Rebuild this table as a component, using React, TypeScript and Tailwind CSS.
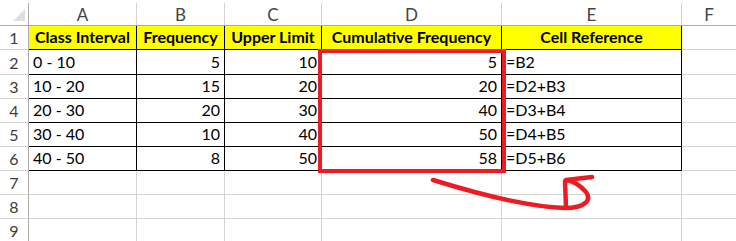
import React from "react";

const widths = ["w-[108px]", "w-[88px]", "w-[97px]", "w-[180px]", "w-[180px]"];
const letters = ["A", "B", "C", "D", "E"];
const headers = ["Class Interval", "Frequency", "Upper Limit", "Cumulative Frequency", "Cell Reference"];
const data = [
  ["0 - 10", "5", "10", "5", "=B2"],
  ["10 - 20", "15", "20", "20", "=D2+B3"],
  ["20 - 30", "20", "30", "40", "=D3+B4"],
  ["30 - 40", "10", "40", "50", "=D4+B5"],
  ["40 - 50", "8", "50", "58", "=D5+B6"],
];
const rowHeights = ["h-[24px]", "h-[25px]", "h-[24px]", "h-[24px]", "h-[24px]", "h-[24px]", "h-[24px]", "h-[24px]", "h-[24px]"];

function RowHeader({ n }: { n: number }) {
  return (
    <div className="w-[29px] shrink-0 h-full border-r border-b border-r-[#ababab] border-b-[#d4d4d4] flex items-end justify-center pb-[3px] text-[16px] leading-none text-[#3c3c3c]">
      {n}
    </div>
  );
}

export default function App() {
  return (
    <div
      className="relative w-[736px] h-[241px] overflow-hidden bg-white text-black"
      style={{ fontFamily: "Lato, 'Noto Sans', sans-serif" }}
    >
      {/* column headers */}
      <div className="flex h-[26px] pt-[3px] border-b border-[#ababab]">
        <div className="w-[29px] shrink-0 h-full border-r border-[#ababab] relative">
          <svg className="absolute right-[3px] bottom-[4px]" width="12" height="12" viewBox="0 0 12 12">
            <polygon points="12,0 12,12 0,12" fill="#dfdfdf" />
          </svg>
        </div>
        {letters.map((l, i) => (
          <div
            key={l}
            className={`${widths[i]} shrink-0 h-full border-r border-[#d4d4d4] flex items-center justify-center text-[17px] leading-none text-[#444]`}
          >
            {l}
          </div>
        ))}
        <div className="flex-1 h-full flex items-center justify-center text-[17px] leading-none text-[#444]">F</div>
      </div>

      {/* row 1: headers */}
      <div className={`flex ${rowHeights[0]}`}>
        <RowHeader n={1} />
        {headers.map((h, i) => (
          <div
            key={h}
            className={`${widths[i]} shrink-0 h-full border-r border-b border-black bg-[#ffff00] flex items-end justify-center pb-[4px] text-[16px] font-bold leading-none whitespace-nowrap`}
          >
            {h}
          </div>
        ))}
        <div className="flex-1 h-full border-b border-[#d4d4d4]" />
      </div>

      {/* data rows */}
      {data.map((r, ri) => (
        <div key={ri} className={`flex ${rowHeights[ri + 1]}`}>
          <RowHeader n={ri + 2} />
          {r.map((v, ci) => (
            <div
              key={ci}
              className={`${widths[ci]} shrink-0 h-full border-r border-b border-black flex items-end pb-[4px] px-[4px] text-[16px] leading-none whitespace-nowrap ${
                ci === 0 || ci === 4 ? "justify-start" : "justify-end"
              }`}
            >
              {v}
            </div>
          ))}
          <div className="flex-1 h-full border-b border-[#d4d4d4]" />
        </div>
      ))}

      {/* empty rows */}
      {[7, 8, 9].map((n, i) => (
        <div key={n} className={`flex ${rowHeights[6 + i]}`}>
          <RowHeader n={n} />
          {widths.map((w, ci) => (
            <div key={ci} className={`${w} shrink-0 h-full border-r border-b border-[#d4d4d4]`} />
          ))}
          <div className="flex-1 h-full border-b border-[#d4d4d4]" />
        </div>
      ))}

      {/* annotation overlay */}
      <svg className="absolute inset-0 pointer-events-none" width="736" height="241" viewBox="0 0 736 241">
        <rect x="320" y="51" width="184" height="120" fill="none" stroke="#ed1c24" strokeWidth="4" />
        <path
          d="M433,180 C475,193 525,207 565,208 C585,208 592,200 586,192 C580,185 572,181 566,180 L592,177 M565,181 L566,207"
          fill="none"
          stroke="#ed1c24"
          strokeWidth="4.5"
          strokeLinecap="round"
          strokeLinejoin="round"
        />
      </svg>
    </div>
  );
}
